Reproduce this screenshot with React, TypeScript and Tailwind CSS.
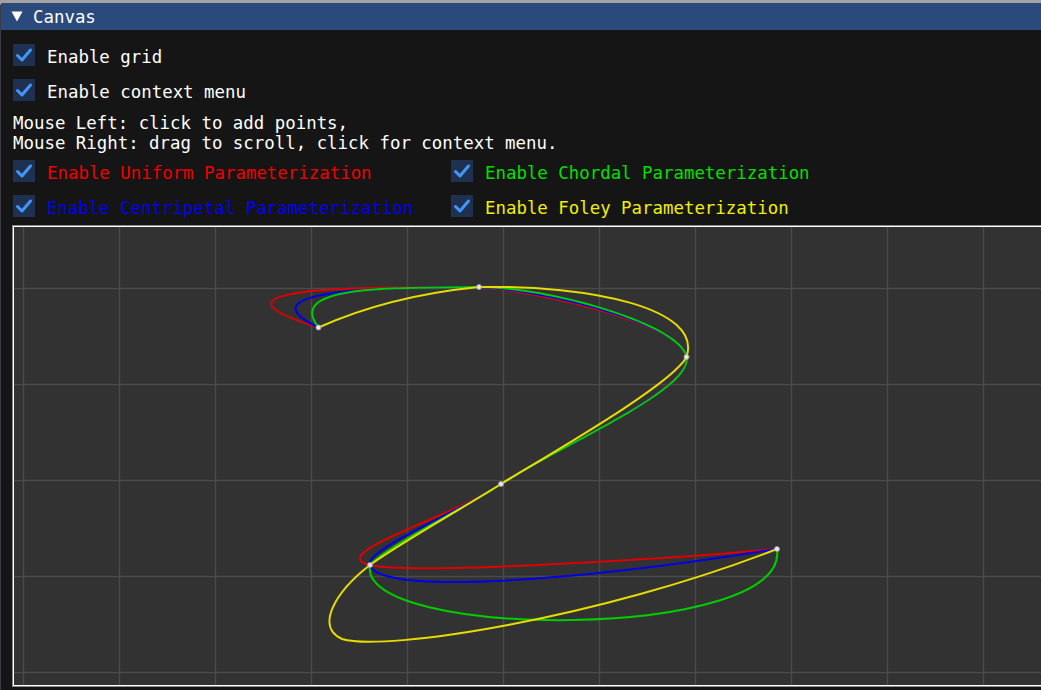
import React from "react";

type Pt = [number, number];

const P: Pt[] = [
  [318.5, 327.5],
  [479, 287],
  [686.5, 357],
  [501, 484],
  [370, 565],
  [777, 549],
];

function dist(a: Pt, b: Pt) {
  return Math.hypot(a[0] - b[0], a[1] - b[1]);
}

function lerp(a: Pt, b: Pt, ta: number, tb: number, t: number): Pt {
  const d = tb - ta;
  const u = (tb - t) / d;
  const v = (t - ta) / d;
  return [a[0] * u + b[0] * v, a[1] * u + b[1] * v];
}

function crSeg(p0: Pt, p1: Pt, p2: Pt, p3: Pt, alpha: number, n = 48): Pt[] {
  const t0 = 0;
  const t1 = t0 + Math.pow(dist(p0, p1), alpha);
  const t2 = t1 + Math.pow(dist(p1, p2), alpha);
  const t3 = t2 + Math.pow(dist(p2, p3), alpha);
  const out: Pt[] = [];
  for (let i = 1; i <= n; i++) {
    const t = t1 + ((t2 - t1) * i) / n;
    const a1 = lerp(p0, p1, t0, t1, t);
    const a2 = lerp(p1, p2, t1, t2, t);
    const a3 = lerp(p2, p3, t2, t3, t);
    const b1 = lerp(a1, a2, t0, t2, t);
    const b2 = lerp(a2, a3, t1, t3, t);
    out.push(lerp(b1, b2, t1, t2, t));
  }
  return out;
}

function curvePath(alpha: number, start: string, end: string) {
  let d = `M ${P[0][0]} ${P[0][1]} ${start}`;
  for (let i = 1; i <= 3; i++) {
    const pts = crSeg(P[i - 1], P[i], P[i + 1], P[i + 2], alpha);
    d += " L " + pts.map((p) => `${p[0].toFixed(2)} ${p[1].toFixed(2)}`).join(" L ");
  }
  d += ` ${end}`;
  return d;
}

const redD = curvePath(0, "C 180 285 380 287 479 287", "C 416 576 700 556 777 549");
const blueD = curvePath(0.5, "C 240 290 380 287 479 287", "C 378 594 560 584 777 549");
const greenD = curvePath(1, "C 285 285 390 288 479 287", "C 355 640 790 642 777 549");
const yellowD =
  "M 318.5 327.5 C 373 303 429 292 479 287 C 590 285 703 308 686.5 357 C 672 385 543 458 501 484 C 458 511 400 543 370 565 C 335 592 315 627 342 639 C 385 652 600 618 777 549";

function Check() {
  return (
    <div className="w-[22px] h-[22px] bg-[#1f3150] flex items-center justify-center shrink-0">
      <svg width="22" height="22" viewBox="0 0 22 22">
        <polyline
          points="4.5,11.5 9,16 17.5,6"
          fill="none"
          stroke="#4296fa"
          strokeWidth="3"
          strokeLinecap="round"
          strokeLinejoin="round"
        />
      </svg>
    </div>
  );
}

function CheckRow({ label, color }: { label: string; color: string }) {
  return (
    <div className="flex items-start h-[22px]">
      <Check />
      <span className="ml-[12px] mt-[3px] whitespace-pre" style={{ color }}>
        {label}
      </span>
    </div>
  );
}

export default function App() {
  const vlines: number[] = [];
  for (let x = 9.5; x < 1100; x += 96) vlines.push(x);
  const hlines: number[] = [];
  for (let y = 61.5; y < 470; y += 96) hlines.push(y);

  return (
    <div
      className="w-[1041px] h-[690px] overflow-hidden bg-[#a3a3a3] text-white text-[17.4px] leading-[20px]"
      style={{ fontFamily: '"DejaVu Sans Mono", "Liberation Mono", monospace' }}
    >
      <div className="mt-[3px] w-[1120px] h-[700px] bg-[#151515] rounded-tl-[4px] border-l border-[#3c3c46] flex flex-col">
        <div className="h-[27px] bg-[#294a7a] rounded-tl-[4px] flex items-center pl-[10px]">
          <svg width="12" height="11" viewBox="0 0 12 11">
            <polygon points="0.5,0.5 11.5,0.5 6,10.5" fill="#ffffff" />
          </svg>
          <span className="ml-[10px] mt-[1px]">Canvas</span>
        </div>
        <div className="pl-[12px] pt-[14px] flex flex-col">
          <CheckRow label="Enable grid" color="#ffffff" />
          <div className="mt-[13px]">
            <CheckRow label="Enable context menu" color="#ffffff" />
          </div>
          <div className="mt-[12px] whitespace-pre">
            <div>Mouse Left: click to add points,</div>
            <div>Mouse Right: drag to scroll, click for context menu.</div>
          </div>
          <div className="mt-[7px] flex">
            <div className="w-[438px]">
              <CheckRow label="Enable Uniform Parameterization" color="#f00000" />
            </div>
            <CheckRow label="Enable Chordal Parameterization" color="#00e000" />
          </div>
          <div className="mt-[13px] flex">
            <div className="w-[438px]">
              <CheckRow label="Enable Centripetal Parameterization" color="#0000f0" />
            </div>
            <CheckRow label="Enable Foley Parameterization" color="#f0f000" />
          </div>
          <div className="mt-[9px] w-[1090px] h-[460px] border border-white bg-[#323232] shadow-[0_0_0_1px_#8a8a8a] overflow-hidden">
            <svg width="1090" height="458" viewBox="0 0 1090 458">
              {vlines.map((x) => (
                <line key={"v" + x} x1={x} y1={0} x2={x} y2={458} stroke="#4a4a4a" strokeWidth="1.5" />
              ))}
              {hlines.map((y) => (
                <line key={"h" + y} x1={0} y1={y} x2={1090} y2={y} stroke="#4a4a4a" strokeWidth="1.5" />
              ))}
              <g transform="translate(-14,-227)" fill="none" strokeWidth="2" strokeLinejoin="round" strokeLinecap="round">
                <path d={redD} stroke="#e00000" />
                <path d={blueD} stroke="#0000e6" />
                <path d={greenD} stroke="#00cc00" />
                <path d={yellowD} stroke="#e6dc00" />
                {P.map((p, i) => (
                  <circle key={i} cx={p[0]} cy={p[1]} r="2.5" fill="#e8e8e8" stroke="#a0a0a0" strokeWidth="0.8" />
                ))}
              </g>
            </svg>
          </div>
        </div>
      </div>
    </div>
  );
}
